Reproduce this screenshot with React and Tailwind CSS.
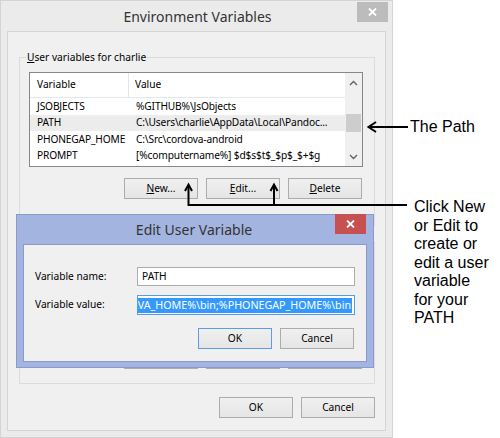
import React from "react";

const userVars = [
  { name: "JSOBJECTS", value: "%GITHUB%\\JsObjects" },
  { name: "PATH", value: "C:\\Users\\charlie\\AppData\\Local\\Pandoc...", selected: true },
  { name: "PHONEGAP_HOME", value: "C:\\Src\\cordova-android" },
  { name: "PROMPT", value: "[%computername%] $d$s$t$_$p$_$+$g" },
];

function CloseX() {
  return (
    <svg width="9" height="8" viewBox="0 0 9 8">
      <path d="M1 0.5 L8 7.5 M8 0.5 L1 7.5" stroke="white" strokeWidth="1.8" fill="none" />
    </svg>
  );
}

function Chevron({ down }) {
  return (
    <svg width="9" height="6" viewBox="0 0 9 6">
      <path
        d={down ? "M1 1 L4.5 4.5 L8 1" : "M1 5 L4.5 1.5 L8 5"}
        stroke="#606060"
        strokeWidth="1.3"
        fill="none"
      />
    </svg>
  );
}

function WinButton({ children, primary, className = "" }) {
  return (
    <button
      className={`h-[21px] w-[74px] flex items-center justify-center border bg-gradient-to-b from-[#f0f0f0] to-[#e5e5e5] text-black leading-none ${
        primary ? "border-[#5b9ee6]" : "border-[#acacac]"
      } ${className}`}
    >
      {children}
    </button>
  );
}

function ListView({ rows, height }) {
  return (
    <div className={`flex border border-[#828790] bg-white ${height}`}>
      <div className="flex-1 flex flex-col min-w-0">
        <div className="h-[25px] flex border-b border-[#e3e8f0] shrink-0">
          <div className="w-[99px] pl-[7px] flex items-center border-r border-[#e5e5e5]">Variable</div>
          <div className="flex-1 pl-[6px] flex items-center">Value</div>
        </div>
        {rows.map((r) => (
          <div
            key={r.name}
            className={`h-[16.5px] flex items-center whitespace-nowrap tracking-[-0.15px] ${
              r.selected ? "bg-[#ececec]" : ""
            }`}
          >
            <div className="w-[99px] pl-[7px]">{r.name}</div>
            <div className="flex-1 pl-[7px] overflow-hidden">{r.value}</div>
          </div>
        ))}
      </div>
      <div className="w-[17px] bg-[#f0f0f0] flex flex-col items-center">
        <div className="h-[20px] flex items-center justify-center">
          <Chevron />
        </div>
        <div className="h-[21px]" />
        <div className="w-[15px] h-[18px] bg-[#cdcdcd]" />
        <div className="flex-1" />
        <div className="h-[18px] flex items-center justify-center">
          <Chevron down />
        </div>
      </div>
    </div>
  );
}

function VarButtons({ labels = true }) {
  return (
    <div className="flex justify-end gap-[8px] pr-[1px]">
      <WinButton>
        {labels && (
          <>
            <span className="underline">N</span>ew...
          </>
        )}
      </WinButton>
      <WinButton>
        {labels && (
          <>
            <span className="underline">E</span>dit...
          </>
        )}
      </WinButton>
      <WinButton>
        {labels && (
          <>
            <span className="underline">D</span>elete
          </>
        )}
      </WinButton>
    </div>
  );
}

function MainWindow() {
  return (
    <div className="absolute left-0 top-0 w-[393px] h-[438px] bg-[#ebebeb] border border-[#d4d4d4] flex flex-col">
      <div className="relative h-[30px] shrink-0 flex items-center justify-center">
        <span className="text-[14px] text-[#333] pl-[2px]">Environment Variables</span>
        <div className="absolute right-[4px] top-[1px] w-[31px] h-[20px] bg-[#bcbcbc] flex items-center justify-center">
          <CloseX />
        </div>
      </div>
      <div className="flex-1 mx-[6px] mb-[6px] border border-[#d5d5d5] bg-[#f0f0f0] flex flex-col">
        <fieldset className="mt-[18px] ml-[11px] mr-[10px] border border-[#dcdcdc] pl-[9px] pr-[11px] pb-[26px] min-w-0">
          <legend className="ml-[-3px] px-[1px] leading-[14px]">
            <span className="underline">U</span>ser variables for charlie
          </legend>
          <div className="mt-[8px]">
            <ListView rows={userVars} height="h-[95px]" />
          </div>
          <div className="mt-[11px]">
            <VarButtons />
          </div>
        </fieldset>
        {/* system variables group, almost all under the edit dialog */}
        <div className="mt-[15px] ml-[11px] mr-[10px] border border-[#dcdcdc] pl-[9px] pr-[11px] pt-[106px] pb-[14px]">
          <VarButtons labels={false} />
        </div>
        <div className="mt-[13px] mr-[10px] flex justify-end gap-[8px]">
          <WinButton>OK</WinButton>
          <WinButton>Cancel</WinButton>
        </div>
      </div>
    </div>
  );
}

function EditDialog() {
  return (
    <div className="absolute left-[16px] top-[214px] w-[358px] h-[154px] bg-[#a3b4e0] border border-[#8a9bcb] flex flex-col">
      <div className="relative h-[29px] shrink-0 flex items-center justify-center">
        <span className="text-[14px] text-[#333] pr-[2px]">Edit User Variable</span>
        <div className="absolute right-[7px] top-[-1px] w-[31px] h-[20px] bg-[#c75050] flex items-center justify-center">
          <CloseX />
        </div>
      </div>
      <div className="flex-1 mx-[6px] mb-[5px] border border-[#8a9bcb] bg-[#f0f0f0] flex flex-col pl-[11px] pr-[11px] pt-[22px]">
        <div className="flex items-center h-[19px]">
          <div className="w-[102px]">Variable name:</div>
          <div className="flex-1 h-[19px] border border-[#adadad] bg-white flex items-center px-[4px]">PATH</div>
        </div>
        <div className="flex items-center h-[20px] mt-[9px]">
          <div className="w-[102px]">Variable value:</div>
          <div className="flex-1 min-w-0 h-[20px] border border-[#569de5] bg-white flex items-center justify-end overflow-hidden px-[2px]">
            <span className="shrink-0 whitespace-nowrap bg-[#3399ff] text-white h-[15px] leading-[15px] pr-[1px] text-[10.7px]">
              %JAVA_HOME%\bin;%PHONEGAP_HOME%\bin
            </span>
          </div>
        </div>
        <div className="mt-[13px] flex justify-end gap-[8px] pr-[1px]">
          <WinButton primary>OK</WinButton>
          <WinButton>Cancel</WinButton>
        </div>
      </div>
    </div>
  );
}

function Annotations() {
  return (
    <>
      <svg className="absolute left-0 top-0 pointer-events-none" width="500" height="438" viewBox="0 0 500 438">
        <g stroke="black" strokeWidth="2" fill="none">
          <path d="M368 127 H408" />
          <path d="M376 122 L368.5 127 L376 132" />
          <path d="M188.5 185 V206 M274 185 V206 M187.5 205 H407" />
          <path d="M185 191 L188.5 184.5 L192 191" />
          <path d="M270.5 191 L274 184.5 L277.5 191" />
        </g>
      </svg>
      <div className="absolute left-[410px] top-[118px] font-['Liberation_Sans',Arial,sans-serif] text-[16px] leading-[18px]">
        The Path
      </div>
      <div className="absolute left-[414px] top-[198px] w-[86px] font-['Liberation_Sans',Arial,sans-serif] text-[16px] leading-[18.5px]">
        Click New
        <br />
        or Edit to
        <br />
        create or
        <br />
        edit a user
        <br />
        variable
        <br />
        for your
        <br />
        PATH
      </div>
    </>
  );
}

export default function App() {
  return (
    <div className="relative w-[500px] h-[438px] bg-white overflow-hidden text-[10.2px] text-black font-['Noto_Sans',sans-serif]">
      <MainWindow />
      <EditDialog />
      <Annotations />
    </div>
  );
}
